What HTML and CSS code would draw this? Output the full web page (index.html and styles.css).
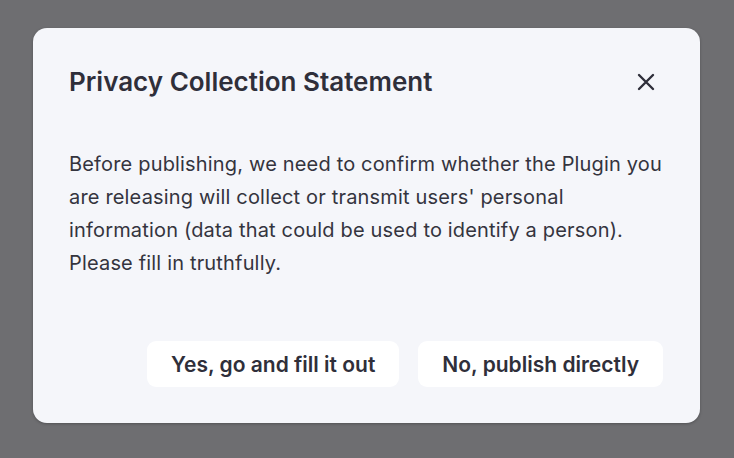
FILE: index.html
```html
<!DOCTYPE html>
<html>
<head>
<meta charset="utf-8">
<link rel="stylesheet" href="styles.css">
</head>
<body>
<div class="overlay">
  <div class="modal">
    <div class="header">
      <h2 class="title">Privacy Collection Statement</h2>
      <button class="close" aria-label="Close">
        <svg width="18" height="18" viewBox="0 0 18 18"><path d="M2 2L16 16M16 2L2 16" stroke="#2f2f3a" stroke-width="2.4" stroke-linecap="round"/></svg>
      </button>
    </div>
    <p class="body">Before publishing, we need to confirm whether the Plugin you are releasing will collect or transmit users' personal information (data that could be used to identify a person). Please fill in truthfully.</p>
    <div class="actions">
      <button class="btn">Yes, go and fill it out</button>
      <button class="btn">No, publish directly</button>
    </div>
  </div>
</div>
</body>
</html>
```

FILE: styles.css
```css
* { box-sizing: border-box; }
html, body { margin: 0; padding: 0; }
body {
  width: 734px;
  height: 458px;
  background: #6e6e71;
  font-family: Inter, "Noto Sans", sans-serif;
  color: #2f2f3a;
}
.overlay {
  padding: 28px 34px 35px 33px;
  height: 458px;
}
.modal {
  width: 667px;
  height: 395px;
  background: #f5f6fa;
  border-radius: 14px;
  padding: 36px 37px 36px 36px;
  box-shadow: 0 1px 3px rgba(0,0,0,0.25);
  display: flex;
  flex-direction: column;
}
.header {
  display: flex;
  align-items: center;
  justify-content: space-between;
}
.title {
  margin: 0;
  font-size: 26px;
  font-weight: 600;
  line-height: 36px;
}
.close {
  border: 0;
  background: none;
  padding: 0;
  width: 24px;
  height: 24px;
  display: flex;
  align-items: center;
  justify-content: center;
  margin-right: 5px;
}
.body {
  margin: 48px 0 0 0;
  font-size: 20px;
  line-height: 33px;
  letter-spacing: 0.17px;
  color: #34343e;
}
.actions {
  margin-top: auto;
  display: flex;
  justify-content: flex-end;
  gap: 19px;
}
.btn {
  font-family: inherit;
  font-size: 21px;
  font-weight: 600;
  color: #2f2f3a;
  background: #ffffff;
  border: 0;
  border-radius: 9px;
  height: 46px;
  padding: 0 24px;
}
```
